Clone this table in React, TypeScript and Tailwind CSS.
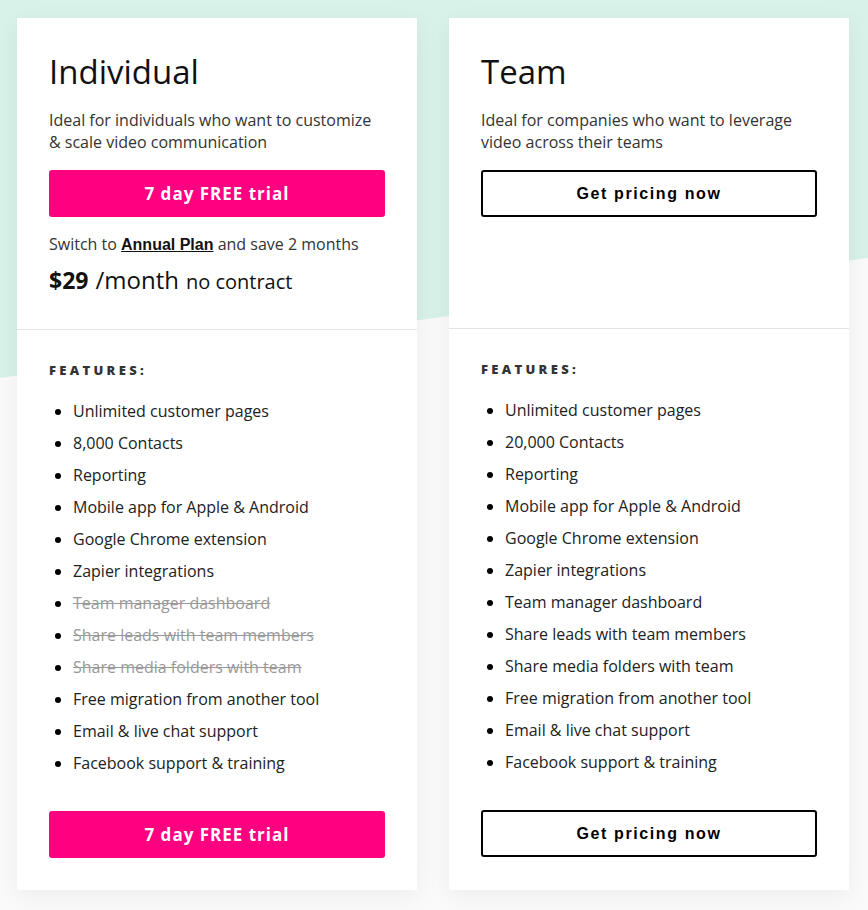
const individualFeatures = [
  { label: "Unlimited customer pages" },
  { label: "8,000 Contacts" },
  { label: "Reporting" },
  { label: "Mobile app for Apple & Android" },
  { label: "Google Chrome extension" },
  { label: "Zapier integrations" },
  { label: "Team manager dashboard", off: true },
  { label: "Share leads with team members", off: true },
  { label: "Share media folders with team", off: true },
  { label: "Free migration from another tool" },
  { label: "Email & live chat support" },
  { label: "Facebook support & training" },
];

const teamFeatures = [
  { label: "Unlimited customer pages" },
  { label: "20,000 Contacts" },
  { label: "Reporting" },
  { label: "Mobile app for Apple & Android" },
  { label: "Google Chrome extension" },
  { label: "Zapier integrations" },
  { label: "Team manager dashboard" },
  { label: "Share leads with team members" },
  { label: "Share media folders with team" },
  { label: "Free migration from another tool" },
  { label: "Email & live chat support" },
  { label: "Facebook support & training" },
];

type Feature = { label: string; off?: boolean };

function TrialButton() {
  return (
    <button
      type="button"
      className="flex h-[47px] w-full items-center justify-center rounded-[3px] bg-[#ff0080] text-[17px] font-bold tracking-[1px] text-white"
    >
      7 day FREE trial
    </button>
  );
}

function PricingButton() {
  return (
    <button
      type="button"
      className="flex h-[47px] w-full items-center justify-center rounded-[3px] border-2 border-black bg-white font-['Liberation_Sans',Arial,sans-serif] text-[16px] font-bold tracking-[1.6px] text-black"
    >
      Get pricing now
    </button>
  );
}

function FeatureList({ items }: { items: Feature[] }) {
  return (
    <div className="px-8 pt-[30px] pb-8">
      <p className="text-[13px] leading-[20px] font-extrabold tracking-[3.3px] text-[#333]">
        FEATURES:
      </p>
      <ul className="mt-[15px] list-disc pl-6 marker:text-black">
        {items.map((f) => (
          <li
            key={f.label}
            className={
              f.off
                ? "text-[16px] leading-[32px] text-[#999] line-through"
                : "text-[16px] leading-[32px] text-[#222]"
            }
          >
            {f.label}
          </li>
        ))}
      </ul>
    </div>
  );
}

export default function App() {
  return (
    <div className="relative min-h-[910px] w-full overflow-hidden bg-[#fafafa] font-['Open_Sans',sans-serif]">
      <svg
        className="absolute top-0 left-0 h-[378px] w-full"
        viewBox="0 0 868 378"
        preserveAspectRatio="none"
        aria-hidden="true"
      >
        <polygon points="0,0 868,0 868,258 0,378" fill="#d8f2e9" />
      </svg>

      <div className="relative flex gap-8 px-[17px] pt-[18px]">
        {/* Individual */}
        <div className="flex w-[400px] flex-col bg-white shadow-[0_6px_24px_rgba(0,0,0,0.06)]">
          <div className="h-[312px] border-b border-[#e4e4e4] px-8 pt-[35px]">
            <h2 className="text-[33px] leading-[38px] text-[#111]">Individual</h2>
            <p className="mt-[18px] text-[16px] leading-[22px] text-[#333]">
              Ideal for individuals who want to customize & scale video communication
            </p>
            <div className="mt-[17px]">
              <TrialButton />
            </div>
            <p className="mt-4 text-[16px] leading-[22px] text-[#333]">
              Switch to{" "}
              <a className="font-['Liberation_Sans',Arial,sans-serif] font-bold text-[#111] underline">
                Annual Plan
              </a>{" "}
              and save 2 months
            </p>
            <p className="mt-[7px] flex items-baseline gap-[7px] leading-[34px] text-[#111]">
              <span className="text-[23px] font-bold">$29</span>
              <span className="text-[24px]">/month</span>
              <span className="text-[20px]">no contract</span>
            </p>
          </div>
          <FeatureList items={individualFeatures} />
          <div className="px-8 pb-8">
            <TrialButton />
          </div>
        </div>

        {/* Team */}
        <div className="flex w-[400px] flex-col bg-white shadow-[0_6px_24px_rgba(0,0,0,0.06)]">
          <div className="h-[311px] border-b border-[#e4e4e4] px-8 pt-[35px]">
            <h2 className="text-[33px] leading-[38px] text-[#111]">Team</h2>
            <p className="mt-[18px] text-[16px] leading-[22px] text-[#333]">
              Ideal for companies who want to leverage video across their teams
            </p>
            <div className="mt-[17px]">
              <PricingButton />
            </div>
          </div>
          <FeatureList items={teamFeatures} />
          <div className="px-8 pb-8">
            <PricingButton />
          </div>
        </div>
      </div>
    </div>
  );
}
